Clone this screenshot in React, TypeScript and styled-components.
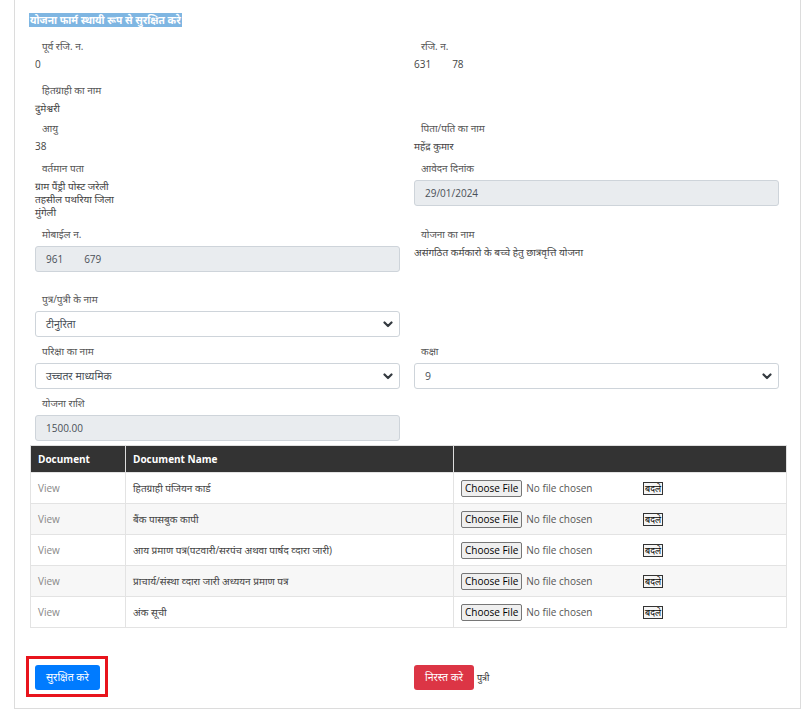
import React from "react";
import styled, { createGlobalStyle } from "styled-components";

const Global = createGlobalStyle`
  html, body { margin: 0; padding: 0; background: #fff; }
  body {
    font-family: "Open Sans", "Noto Sans Devanagari", "Noto Sans", sans-serif;
    font-size: 10px;
    color: #444;
  }
`;

const Card = styled.div`
  margin-left: 14px;
  width: 787px;
  box-sizing: border-box;
  border: 1px solid #dcdcdc;
  border-top: none;
  padding-bottom: 11px;
`;

const HeadingWrap = styled.div`
  padding: 13px 0 0 14px;
  line-height: 14px;
`;

const Heading = styled.span`
  background: #7fb6e2;
  color: #fff;
  font-weight: 700;
  font-size: 10.3px;
  line-height: 14px;
  display: inline-block;
  padding: 0 1px;
`;

const Row = styled.div<{ $mt: number }>`
  display: grid;
  grid-template-columns: 365px 365px;
  column-gap: 14px;
  padding-left: 20px;
  margin-top: ${(p) => p.$mt}px;
  align-items: start;
`;

const Field = styled.div`
  display: flex;
  flex-direction: column;
`;

const Label = styled.div`
  padding-left: 7px;
  line-height: 14px;
  color: #555;
  margin-bottom: 5px;
`;

const Value = styled.div`
  line-height: 13px;
  color: #444;
`;

const Redacted = styled.span`
  display: inline-block;
  width: 21px;
`;

const ReadOnlyInput = styled.div`
  box-sizing: border-box;
  height: 26px;
  border: 1px solid #ced4da;
  border-radius: 3px;
  background: #e9ecef;
  color: #495057;
  display: flex;
  align-items: center;
  padding-left: 10px;
`;

const SelectBox = styled.div`
  box-sizing: border-box;
  height: 26px;
  border: 1px solid #ced4da;
  border-radius: 3px;
  background: #fff;
  color: #495057;
  display: flex;
  align-items: center;
  justify-content: space-between;
  padding: 0 6px 0 10px;
  font-size: 10.5px;
`;

const Chevron = () => (
  <svg width="10" height="7" viewBox="0 0 10 7">
    <polyline points="1.5,1.5 5,5 8.5,1.5" fill="none" stroke="#343a40" strokeWidth="2.2" strokeLinecap="round" strokeLinejoin="round" />
  </svg>
);

const Table = styled.table`
  margin: 4px 0 0 15px;
  width: 757px;
  border-collapse: collapse;
  border: 1px solid #e0e0e0;
  table-layout: fixed;
`;

const Th = styled.th<{ $w?: number }>`
  width: ${(p) => (p.$w ? `${p.$w}px` : "auto")};
  background: #333;
  color: #fff;
  font-weight: 700;
  text-align: left;
  height: 27px;
  padding: 0 7px;
  border-left: 1px solid #ddd;
  box-sizing: border-box;
  &:first-child { border-left: none; }
`;

const Tr = styled.tr`
  &:nth-child(even) { background: #f7f7f7; }
`;

const Td = styled.td`
  height: 31px;
  padding: 0 7px;
  border: 1px solid #e3e3e3;
  box-sizing: border-box;
  color: #444;
  vertical-align: middle;
`;

const ViewLink = styled.span`
  color: #888;
`;

const FileBox = styled.div`
  display: flex;
  align-items: center;
`;

const FilePicker = styled.div`
  width: 182px;
  display: flex;
  align-items: center;
`;

const ChooseButton = styled.span`
  box-sizing: border-box;
  height: 17px;
  line-height: 15px;
  padding: 0 3px;
  border: 1px solid #767676;
  border-radius: 2px;
  background: #efefef;
  color: #000;
`;

const NoFile = styled.span`
  margin-left: 4px;
  color: #555;
`;

const ChangeButton = styled.span`
  box-sizing: border-box;
  height: 13px;
  line-height: 11px;
  padding: 0 1px;
  border: 1px solid #333;
  background: #f5f5f5;
  color: #000;
  font-size: 9px;
`;

const ButtonCell = styled.div`
  display: flex;
  align-items: center;
`;

const Highlight = styled.div`
  display: inline-flex;
  border: 3px solid #e8141c;
  padding: 6px 5px 4px 6px;
  margin: -9px 0 0 -9px;
`;

const Button = styled.button<{ $variant: "primary" | "danger" }>`
  height: 25px;
  border: none;
  border-radius: 3px;
  color: #fff;
  font-family: inherit;
  font-size: 10.5px;
  padding: 0 11px;
  background: ${(p) => (p.$variant === "primary" ? "#007bff" : "#dc3545")};
`;

const Suffix = styled.span`
  margin-left: 3px;
  font-size: 9px;
  color: #333;
`;

const docs = [
  "हितग्राही पंजियन कार्ड",
  "बैंक पासबुक कापी",
  "आय प्रमाण पत्र(पटवारी/सरपंच अथवा पार्षद व्दारा जारी)",
  "प्राचार्य/संस्था व्दारा जारी अध्ययन प्रमाण पत्र",
  "अंक सूची",
];

export default function App() {
  return (
    <>
      <Global />
      <Card>
        <HeadingWrap>
          <Heading>योजना फार्म स्थायी रूप से सुरक्षित करे</Heading>
        </HeadingWrap>

        <Row $mt={12}>
          <Field>
            <Label>पूर्व रजि. न.</Label>
            <Value>0</Value>
          </Field>
          <Field>
            <Label>रजि. न.</Label>
            <Value>
              631<Redacted />78
            </Value>
          </Field>
        </Row>

        <Row $mt={12}>
          <Field>
            <Label>हितग्राही का नाम</Label>
            <Value>दुमेश्वरी</Value>
          </Field>
        </Row>

        <Row $mt={6}>
          <Field>
            <Label>आयु</Label>
            <Value>38</Value>
          </Field>
          <Field>
            <Label>पिता/पति का नाम</Label>
            <Value>महेंद्र कुमार</Value>
          </Field>
        </Row>

        <Row $mt={8}>
          <Field>
            <Label>वर्तमान पता</Label>
            <Value>
              ग्राम पैंड्री पोस्ट जरेली
              <br />
              तहसील पथरिया जिला
              <br />
              मुंगेली
            </Value>
          </Field>
          <Field>
            <Label>आवेदन दिनांक</Label>
            <ReadOnlyInput>29/01/2024</ReadOnlyInput>
          </Field>
        </Row>

        <Row $mt={8}>
          <Field>
            <Label>मोबाईल न.</Label>
            <ReadOnlyInput>
              961<Redacted />679
            </ReadOnlyInput>
          </Field>
          <Field>
            <Label>योजना का नाम</Label>
            <Value>असंगठित कर्मकारो के बच्चे हेतु छात्रवृत्ति योजना</Value>
          </Field>
        </Row>

        <Row $mt={20}>
          <Field>
            <Label>पुत्र/पुत्री के नाम</Label>
            <SelectBox>
              <span>टीनुरिता</span>
              <Chevron />
            </SelectBox>
          </Field>
        </Row>

        <Row $mt={7}>
          <Field>
            <Label>परिक्षा का नाम</Label>
            <SelectBox>
              <span>उच्चतर माध्यमिक</span>
              <Chevron />
            </SelectBox>
          </Field>
          <Field>
            <Label>कक्षा</Label>
            <SelectBox>
              <span>9</span>
              <Chevron />
            </SelectBox>
          </Field>
        </Row>

        <Row $mt={7}>
          <Field>
            <Label>योजना राशि</Label>
            <ReadOnlyInput>1500.00</ReadOnlyInput>
          </Field>
        </Row>

        <Table>
          <thead>
            <tr>
              <Th $w={95}>Document</Th>
              <Th $w={328}>Document Name</Th>
              <Th />
            </tr>
          </thead>
          <tbody>
            {docs.map((d) => (
              <Tr key={d}>
                <Td>
                  <ViewLink>View</ViewLink>
                </Td>
                <Td>{d}</Td>
                <Td>
                  <FileBox>
                    <FilePicker>
                      <ChooseButton>Choose File</ChooseButton>
                      <NoFile>No file chosen</NoFile>
                    </FilePicker>
                    <ChangeButton>बदले</ChangeButton>
                  </FileBox>
                </Td>
              </Tr>
            ))}
          </tbody>
        </Table>

        <Row $mt={37}>
          <ButtonCell>
            <Highlight>
              <Button $variant="primary">सुरक्षित करे</Button>
            </Highlight>
          </ButtonCell>
          <ButtonCell>
            <Button $variant="danger">निरस्त करे</Button>
            <Suffix>पुत्री</Suffix>
          </ButtonCell>
        </Row>
      </Card>
    </>
  );
}
